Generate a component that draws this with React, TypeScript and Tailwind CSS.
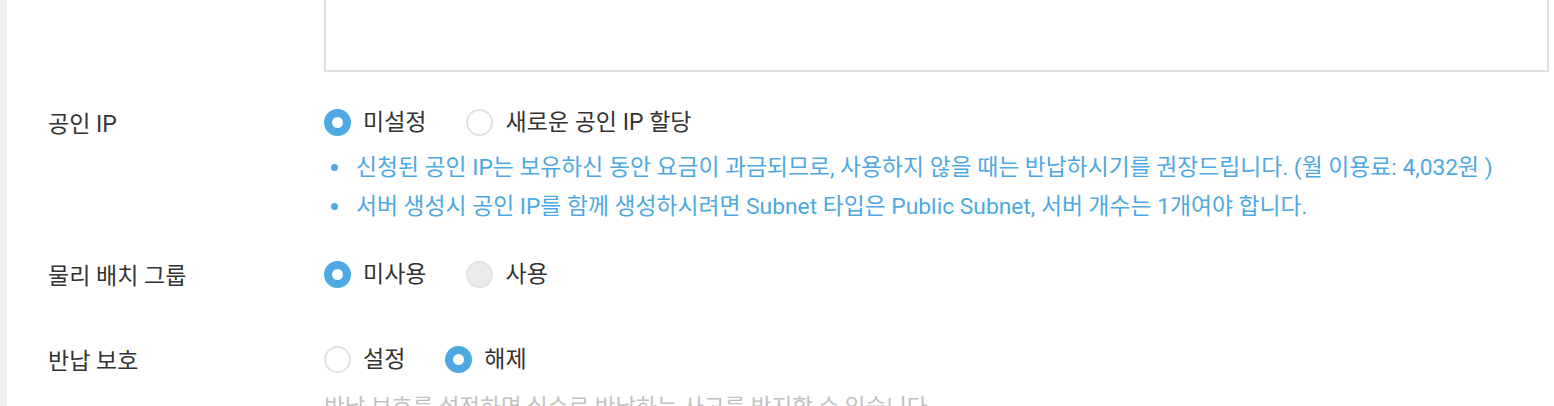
import React from "react";

function Radio({ state }: { state: "on" | "off" | "disabled" }) {
  if (state === "on") {
    return (
      <span className="flex size-[27px] shrink-0 items-center justify-center rounded-full bg-[#4ea8e2]">
        <span className="size-[11px] rounded-full bg-white" />
      </span>
    );
  }
  if (state === "disabled") {
    return <span className="block size-[27px] shrink-0 rounded-full border-2 border-[#e2e2e2] bg-[#ebebeb]" />;
  }
  return <span className="block size-[27px] shrink-0 rounded-full border-2 border-[#e2e2e2] bg-white" />;
}

function Option({ state, label }: { state: "on" | "off" | "disabled"; label: string }) {
  return (
    <label className="mr-[40px] flex items-center gap-[12px]">
      <Radio state={state} />
      <span className="text-[23px] leading-[27px] text-[#333]">{label}</span>
    </label>
  );
}

function Row({ label, children, className = "" }: { label: string; children: React.ReactNode; className?: string }) {
  return (
    <div className={"flex " + className}>
      <div className="w-[276px] shrink-0 pt-[2px] text-[23px] leading-[27px] text-[#333]">{label}</div>
      <div className="flex-1">{children}</div>
    </div>
  );
}

export default function App() {
  return (
    <div
      className="flex h-[406px] w-[1554px] overflow-hidden bg-white"
      style={{ fontFamily: "Roboto, 'Noto Sans CJK KR', sans-serif" }}
    >
      <div className="w-[7px] shrink-0 bg-[#efefef]" />
      <div className="flex-1 pl-[41px] pr-[5px]">
        <div className="ml-[276px] h-[72px] border-x-2 border-b-2 border-[#e0e0e0]" />

        <Row label="공인 IP" className="mt-[37px]">
          <div className="flex items-center">
            <Option state="on" label="미설정" />
            <Option state="off" label="새로운 공인 IP 할당" />
          </div>
          <ul className="mt-[12px] text-[22.8px] leading-[39px] text-[#4ea8e2]">
            <li className="flex items-center">
              <span className="ml-[7px] mr-[18px] size-[7px] shrink-0 rounded-full bg-[#4ea8e2]" />
              신청된 공인 IP는 보유하신 동안 요금이 과금되므로, 사용하지 않을 때는 반납하시기를 권장드립니다. (월 이용료: 4,032원 )
            </li>
            <li className="flex items-center">
              <span className="ml-[7px] mr-[18px] size-[7px] shrink-0 rounded-full bg-[#4ea8e2]" />
              서버 생성시 공인 IP를 함께 생성하시려면 Subnet 타입은 Public Subnet, 서버 개수는 1개여야 합니다.
            </li>
          </ul>
        </Row>

        <Row label="물리 배치 그룹" className="mt-[35px]">
          <div className="flex items-center">
            <Option state="on" label="미사용" />
            <Option state="disabled" label="사용" />
          </div>
        </Row>

        <Row label="반납 보호" className="mt-[56px]">
          <div className="flex items-center">
            <Option state="off" label="설정" />
            <Option state="on" label="해제" />
          </div>
          <div className="mt-[19px] text-[22.5px] leading-[30px] text-[#c2c2c2]">
            반납 보호를 설정하면 실수로 반납하는 사고를 방지할 수 있습니다.
          </div>
        </Row>
      </div>
    </div>
  );
}
